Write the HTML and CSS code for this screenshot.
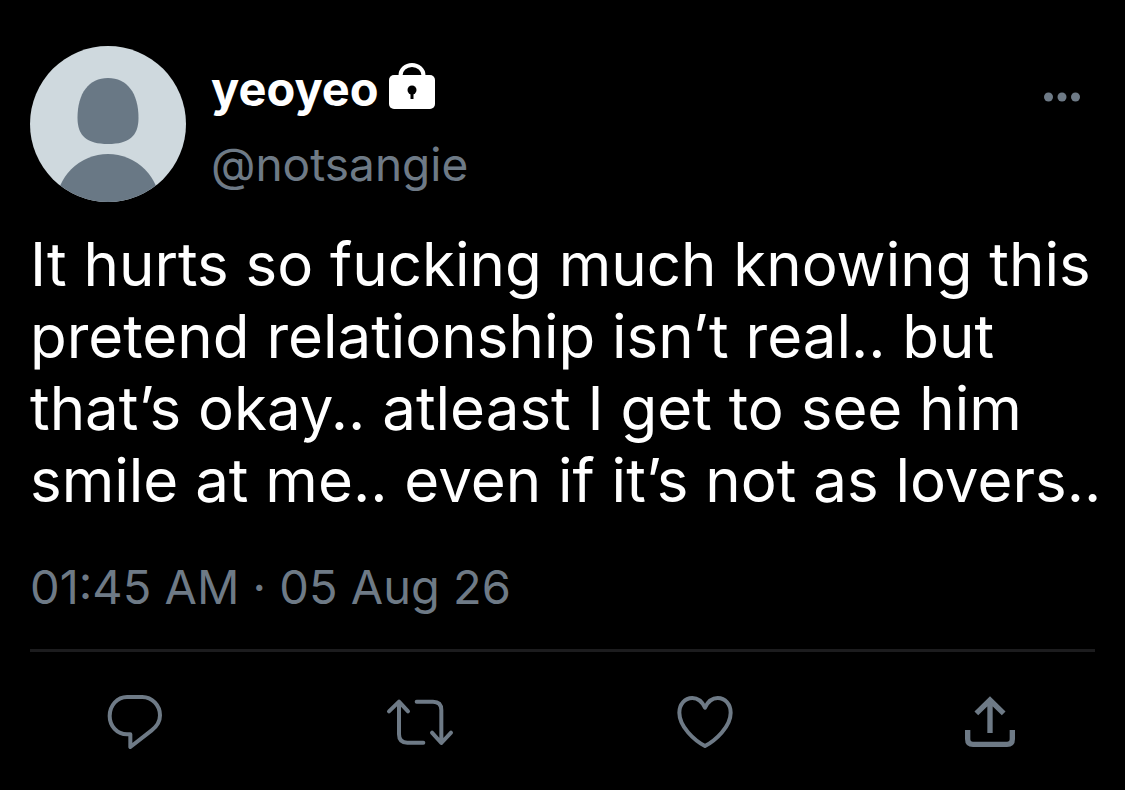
FILE: index.html
```html
<!DOCTYPE html>
<html lang="en">
<head>
  <meta charset="UTF-8">
  <meta name="viewport" content="width=device-width, initial-scale=1">
  <title>yeoyeo (@notsangie)</title>
  <link rel="stylesheet" href="styles.css">
</head>
<body>

  <article class="tweet">
    <header class="tweet-header">
      <svg class="avatar" viewBox="0 0 156 156" role="img" aria-label="Profile picture">
        <clipPath id="round"><circle cx="78" cy="78" r="78"/></clipPath>
        <g clip-path="url(#round)">
          <rect width="156" height="156" fill="#cfd9de"/>
          <g fill="#697885">
            <path d="M78 32C97 32 108.500 47 108.500 72C108.500 90 99 98 78 98C57 98 47.500 90 47.500 72C47.500 47 59 32 78 32Z"/>
            <circle cx="78" cy="160" r="52"/>
          </g>
        </g>
      </svg>

      <div class="author">
        <div class="name">
          <span>yeoyeo</span>
          <svg class="lock" viewBox="0 0 46 46" role="img" aria-label="Protected account">
            <path d="M11.500 14V12.500a11.500 10.500 0 0 1 23 0V14" fill="none" stroke="#fff" stroke-width="4"/>
            <rect y="12" width="46" height="34" rx="5" fill="#fff"/>
            <circle cx="23" cy="27" r="4.500" fill="#000"/>
            <path d="M23 28v8" stroke="#000" stroke-width="3"/>
          </svg>
        </div>
        <a class="handle" href="#">@notsangie</a>
      </div>

      <button class="more" aria-label="More">
        <svg viewBox="0 0 36 10">
          <circle cx="4.500" cy="5" r="4.500"/>
          <circle cx="18" cy="5" r="4.500"/>
          <circle cx="31.500" cy="5" r="4.500"/>
        </svg>
      </button>
    </header>

    <p class="text">It hurts so fucking much knowing this<br>
      pretend relationship isn’t real.. but<br>
      that’s okay.. atleast I get to see him<br>
      smile at me.. even if it’s not as lovers..</p>

    <time class="date" datetime="2026-08-05T01:45">01:45 AM · 05 Aug 26</time>

    <footer class="actions">
      <button aria-label="Reply">
        <svg viewBox="0 0 240 240">
          <path d="M96 51H142C171 51 195 76 195 106C195 125 185 140 170 151L106 201V163H96C66 163 44 138 44 108C44 76 67 51 96 51Z"/>
        </svg>
      </button>
      <button aria-label="Retweet">
        <svg viewBox="0 0 240 240">
          <path d="M27 94L57 65L84 94M57 67V163Q57 188 82 188H130M110 65H159Q184 65 184 90V187M156 158L184 189L213 158"/>
        </svg>
      </button>
      <button aria-label="Like">
        <svg viewBox="0 0 240 240">
          <path d="M120 83C111 64 98 54 82 54C59 54 43 73 43 98C43 140 88 181 120 198C152 181 197 140 197 98C197 73 181 54 158 54C142 54 129 64 120 83Z"/>
        </svg>
      </button>
      <button aria-label="Share">
        <svg class="share" viewBox="0 0 240 240">
          <path d="M79 100L120 60L161 100M120 60V159M53 150V177Q53 193 69 193H171Q187 193 187 177V150"/>
        </svg>
      </button>
    </footer>
  </article>

</body>
</html>
```
FILE: styles.css
```css
body {
  margin: 0;
  background: #000;
  color: #fff;
  font-family: Inter, "Liberation Sans", sans-serif;
}

button {
  padding: 0;
  border: none;
  background: none;
  cursor: pointer;
}

svg {
  display: block;
}

.tweet {
  padding: 46px 30px 30px;
}

.tweet-header {
  display: flex;
  align-items: flex-start;
}

.avatar {
  width: 156px;
  height: 156px;
  flex: none;
}

.author {
  flex: 1;
  margin-left: 25px;
  padding-top: 15px;
}

.name {
  display: flex;
  align-items: center;
  gap: 10px;
  font-size: 47px;
  line-height: 56px;
  font-weight: 700;
}

.lock {
  width: 46px;
  height: 46px;
  margin-bottom: 6px;
}

.handle {
  display: block;
  margin-top: 19px;
  color: #6e7a86;
  font-size: 46px;
  line-height: 56px;
  text-decoration: none;
}

.more {
  margin: 46px 15px 0 0;
}

.more svg {
  width: 36px;
  height: 10px;
  fill: #6e7a86;
}

.text {
  margin: 26px -20px 0 0;
  font-size: 60px;
  line-height: 72px;
}

.date {
  display: block;
  padding: 43px 0 34px;
  color: #6e7a86;
  font-size: 47px;
  line-height: 56px;
}

.actions {
  display: flex;
  justify-content: space-between;
  padding: 28px 65px 0;
  border-top: 3px solid #1c1c1e;
}

.actions svg {
  width: 80px;
  height: 80px;
  fill: none;
  stroke: #6e7a86;
  stroke-width: 12;
  stroke-linecap: round;
  stroke-linejoin: round;
}

.actions .share {
  stroke-width: 16;
  stroke-linecap: butt;
  stroke-linejoin: miter;
}
```
